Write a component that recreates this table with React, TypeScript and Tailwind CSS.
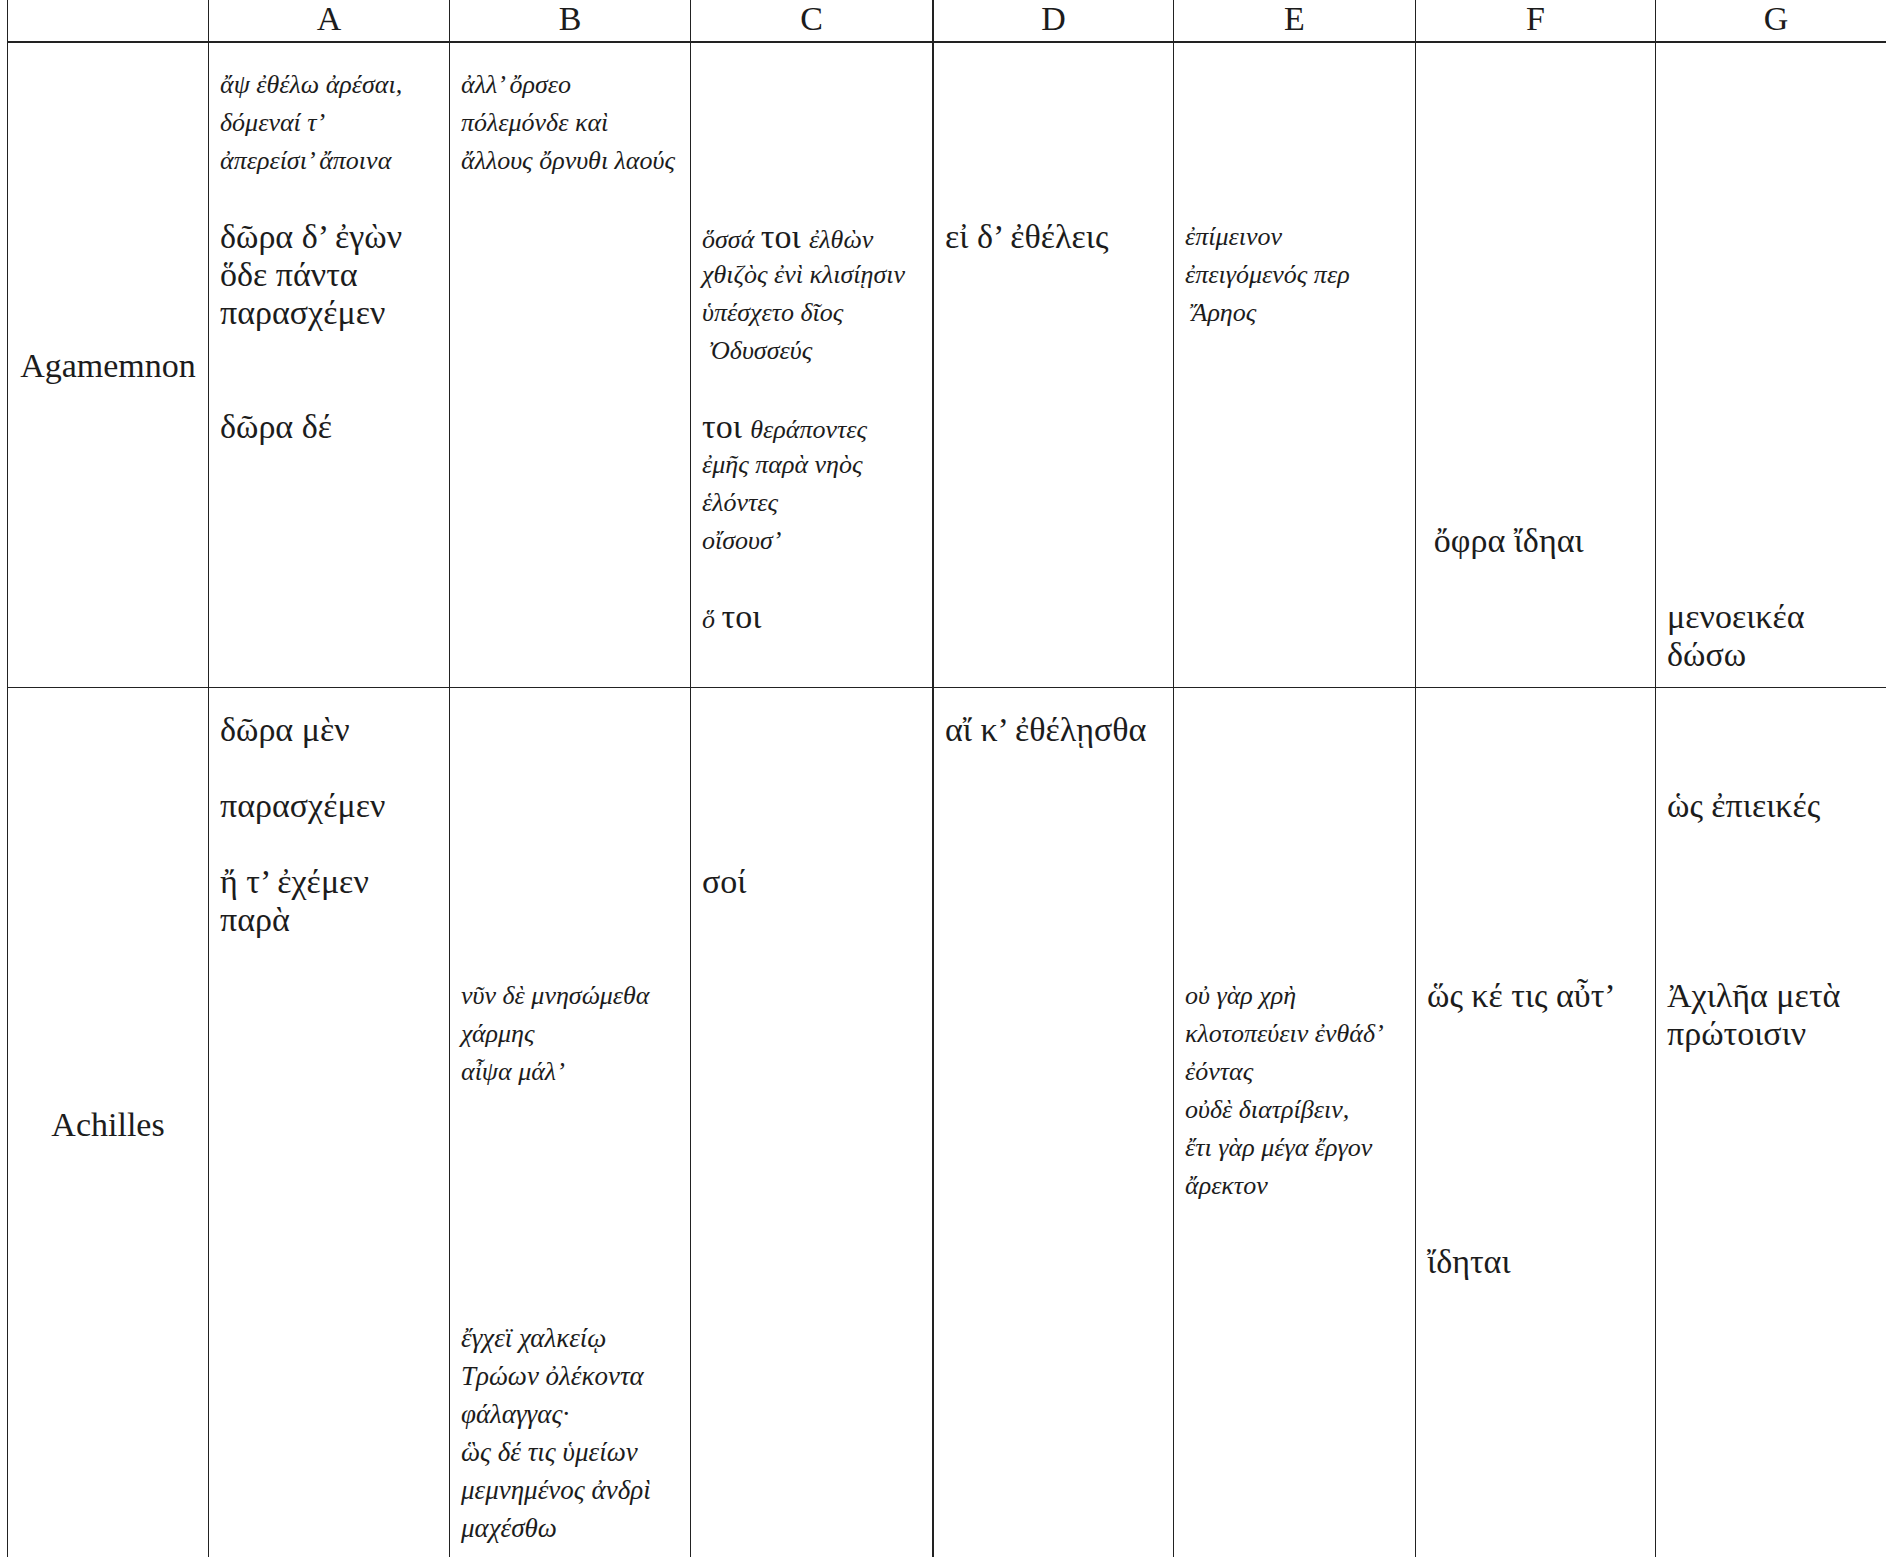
import React from 'react';

type Seg = [style: 'u' | 'i' | 'j', text: string];
type Line = Seg[];
type Cell = Record<number, Line>;

const u = (t: string): Line => [['u', t]];
const i = (t: string): Line => [['i', t]];
const j = (t: string): Line => [['j', t]];

const columns = ['A', 'B', 'C', 'D', 'E', 'F', 'G'];
const widths = ['w-[241px]', 'w-[241px]', 'w-[242px]', 'w-[241px]', 'w-[242px]', 'w-[240px]', 'w-[241px]'];

const agamemnon: Cell[] = [
  {
    0: i('ἄψ ἐθέλω ἀρέσαι,'),
    1: i('δόμεναί τ’'),
    2: i('ἀπερείσι’ ἄποινα'),
    4: u('δῶρα δ’ ἐγὼν'),
    5: u('ὅδε πάντα'),
    6: u('παρασχέμεν'),
    9: u('δῶρα δέ'),
  },
  {
    0: i('ἀλλ’ ὄρσεο'),
    1: i('πόλεμόνδε καὶ'),
    2: i('ἄλλους ὄρνυθι λαούς'),
  },
  {
    4: [['i', 'ὅσσά '], ['u', 'τοι '], ['i', 'ἐλθὼν']],
    5: i('χθιζὸς ἐνὶ κλισίῃσιν'),
    6: i('ὑπέσχετο δῖος'),
    7: i('\u00a0Ὀδυσσεύς'),
    9: [['u', 'τοι '], ['i', 'θεράποντες']],
    10: i('ἐμῆς παρὰ νηὸς'),
    11: i('ἑλόντες'),
    12: i('οἴσουσ’'),
    14: [['i', 'ὅ '], ['u', 'τοι']],
  },
  { 4: u('εἰ δ’ ἐθέλεις') },
  {
    4: i('ἐπίμεινον'),
    5: i('ἐπειγόμενός περ'),
    6: i('\u00a0Ἄρηος'),
  },
  { 12: u('\u2009ὄφρα ἴδηαι') },
  { 14: u('μενοεικέα'), 15: u('δώσω') },
];

const achilles: Cell[] = [
  {
    0: u('δῶρα μὲν'),
    2: u('παρασχέμεν'),
    4: u('ἤ τ’ ἐχέμεν'),
    5: u('παρὰ'),
  },
  {
    7: i('νῦν δὲ μνησώμεθα'),
    8: i('χάρμης'),
    9: i('αἶψα μάλ’'),
    16: j('ἔγχεϊ χαλκείῳ'),
    17: j('Τρώων ὀλέκοντα'),
    18: j('φάλαγγας·'),
    19: j('ὣς δέ τις ὑμείων'),
    20: j('μεμνημένος ἀνδρὶ'),
    21: j('μαχέσθω'),
  },
  { 4: u('σοί') },
  { 0: u('αἴ κ’ ἐθέλῃσθα') },
  {
    7: i('οὐ γὰρ χρὴ'),
    8: i('κλοτοπεύειν ἐνθάδ’'),
    9: i('ἐόντας'),
    10: i('οὐδὲ διατρίβειν,'),
    11: i('ἔτι γὰρ μέγα ἔργον'),
    12: i('ἄρεκτον'),
  },
  { 7: u('ὥς κέ τις αὖτ’'), 14: u('ἴδηται') },
  { 2: u('ὡς ἐπιεικές'), 7: u('Ἀχιλῆα μετὰ'), 8: u('πρώτοισιν') },
];

function SegText({ seg }: { seg: Seg }) {
  const [style, text] = seg;
  if (style === 'i') return <span className="italic text-[26px]">{text}</span>;
  if (style === 'j') return <span className="italic text-[27px]">{text}</span>;
  return <span className="text-[34px]">{text}</span>;
}

function CellLines({ cell, count }: { cell: Cell; count: number }) {
  return (
    <div className="flex flex-col">
      {Array.from({ length: count }, (_, n) => (
        <div key={n} className="h-[38px] leading-[38px] whitespace-nowrap">
          {(cell[n] ?? []).map((seg, k) => (
            <SegText key={k} seg={seg} />
          ))}
        </div>
      ))}
    </div>
  );
}

function Row({
  name,
  cells,
  count,
  height,
  top,
}: {
  name: string;
  cells: Cell[];
  count: number;
  height: string;
  top: string;
}) {
  return (
    <div className={`flex ${height} border-b-[1.5px] border-[#222]`}>
      <div className="w-[201px] shrink-0 border-l-[1.5px] border-[#222] flex items-center justify-center text-[34px]">
        {name}
      </div>
      {cells.map((cell, k) => (
        <div
          key={k}
          className={`${widths[k]} shrink-0 ${
            k === 3 ? 'border-l-2' : 'border-l-[1.5px]'
          } border-[#222] pl-[11px] ${top} overflow-hidden`}
        >
          <CellLines cell={cell} count={count} />
        </div>
      ))}
    </div>
  );
}

export default function App() {
  return (
    <div
      className="w-[1886px] h-[1557px] overflow-hidden bg-white text-[#1c1c1c]"
      style={{ fontFamily: '"Liberation Serif", "DejaVu Serif", serif' }}
    >
      <div className="ml-[7px] w-[1889px]">
        {/* column letters */}
        <div className="flex h-[43px] border-b-2 border-[#222]">
          <div className="w-[201px] shrink-0 border-l-[1.5px] border-[#222]" />
          {columns.map((c, k) => (
            <div
              key={c}
              className={`${widths[k]} shrink-0 ${
                k === 3 ? 'border-l-2' : 'border-l-[1.5px]'
              } border-[#222] flex items-center justify-center text-[34px] leading-none pb-[4px]`}
            >
              {c}
            </div>
          ))}
        </div>

        <Row name="Agamemnon" cells={agamemnon} count={16} height="h-[645px]" top="pt-[23px]" />
        <Row name="Achilles" cells={achilles} count={22} height="h-[874px]" top="pt-[23px]" />
      </div>
    </div>
  );
}
